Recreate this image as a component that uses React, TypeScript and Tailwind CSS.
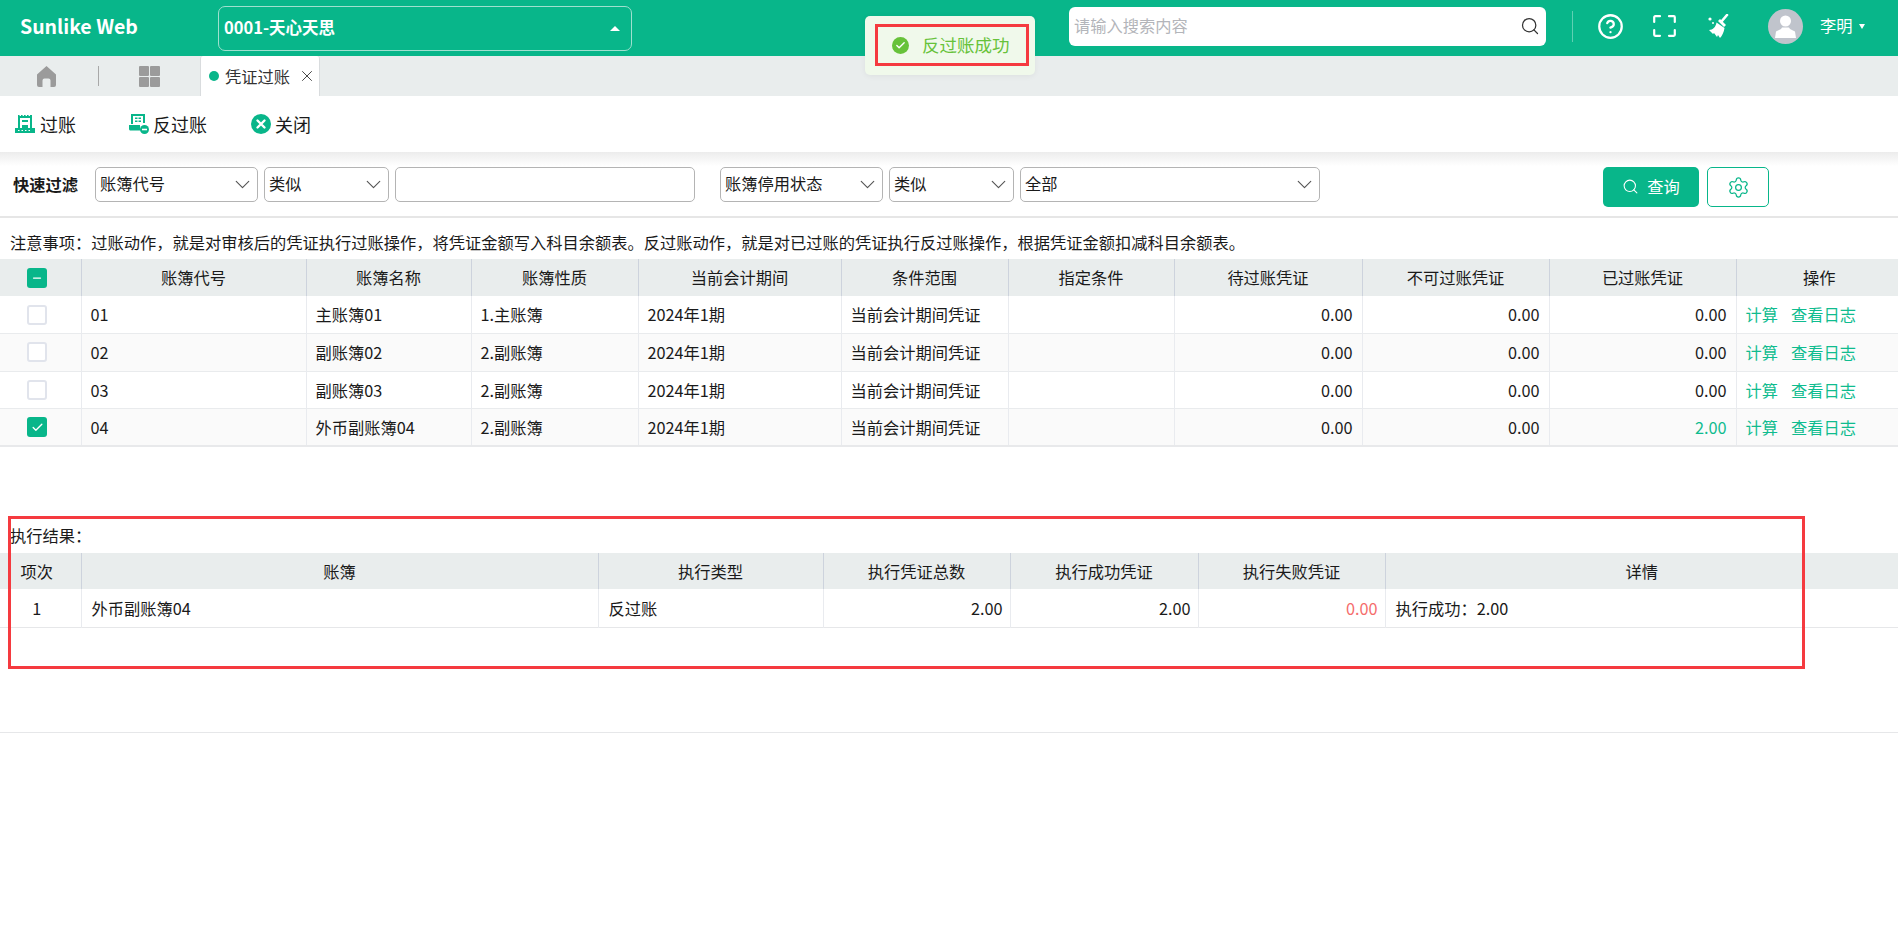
import React from "react";
import { ChevronDown, CircleHelp, Search, Settings, X, Check, Minus } from "lucide-react";

const ledgerRows = [
  { code: "01", name: "主账簿01", type: "1.主账簿", posted: "0.00" },
  { code: "02", name: "副账簿02", type: "2.副账簿", posted: "0.00" },
  { code: "03", name: "副账簿03", type: "2.副账簿", posted: "0.00" },
  { code: "04", name: "外币副账簿04", type: "2.副账簿", posted: "2.00", checked: true },
];

const headCell = "h-[37px] border-l border-[#cdd3dd] font-normal text-center first:border-l-0 first:pr-[7px] last:pl-1";
const bodyCell = "border-l border-[#e9ebef] px-[9px] first:border-l-0";
const resultHead = "h-9 border-l border-[#cdd3dd] font-normal text-center first:border-l-0 first:pr-[7px]";
const resultCell = "border-l border-[#e9ebef] pl-[10px] pr-[7px] first:border-l-0";

const PostIcon = () => (
  <svg width="20" height="18" viewBox="0 0 20 18" className="shrink-0">
    <path fill="#08b68a" d="M3 0h1.6v1H6V0h1.6v1H9V0h1.6v1H12V0h1.6v1H15V0h2v13h-2V3H5v10H3zM7 5h6v2H7zM7 10h6v3H7zM0 13h20v5H0z" />
    <path fill="#fff" d="M3 15h1.5v1H3zM6.5 15H8v1H6.5zM10 15h1.5v1H10zM13.5 15H15v1h-1.5z" />
  </svg>
);

const UnpostIcon = () => (
  <svg width="20" height="20" viewBox="0 0 20 20" className="shrink-0">
    <path fill="#08b68a" d="M2 0h14v9H14V2H4v8H2zM6 3.5h2.5V5H6zM9.5 3.5H12V5H9.5zM6 6.5h2.5V8H6zM9.5 6.5H12V8H9.5zM0 11h11v2.5c0 1 .3 2 .8 3H1.5C.7 16.5 0 15.8 0 15z" />
    <circle cx="15.5" cy="15.5" r="4.5" fill="#08b68a" />
    <path fill="#fff" d="M13 14.7h5v1.6h-5z" />
  </svg>
);

const CloseIcon = () => (
  <svg width="20" height="20" viewBox="0 0 20 20" className="shrink-0">
    <circle cx="10" cy="10" r="10" fill="#08b68a" />
    <path d="M6.5 6.5l7 7M13.5 6.5l-7 7" stroke="#fff" strokeWidth="2.4" strokeLinecap="round" />
  </svg>
);

const HomeIcon = () => (
  <svg width="19" height="21" viewBox="0 0 19 21">
    <path fill="#9b9b9b" d="M9.5 0L19 8.5V19a2 2 0 0 1-2 2h-3.5v-6.5a2 2 0 0 0-2-2h-4a2 2 0 0 0-2 2V21H2a2 2 0 0 1-2-2V8.5z" />
  </svg>
);

const GridIcon = () => (
  <svg width="21" height="21" viewBox="0 0 21 21">
    <path fill="#9b9b9b" d="M1 0h8a1 1 0 0 1 1 1v8a1 1 0 0 1-1 1H1a1 1 0 0 1-1-1V1a1 1 0 0 1 1-1zM12 0h8a1 1 0 0 1 1 1v8a1 1 0 0 1-1 1h-8a1 1 0 0 1-1-1V1a1 1 0 0 1 1-1zM1 11h8a1 1 0 0 1 1 1v8a1 1 0 0 1-1 1H1a1 1 0 0 1-1-1v-8a1 1 0 0 1 1-1zM12 11h8a1 1 0 0 1 1 1v8a1 1 0 0 1-1 1h-8a1 1 0 0 1-1-1v-8a1 1 0 0 1 1-1z" />
  </svg>
);

const FullscreenIcon = () => (
  <svg width="23" height="22" viewBox="0 0 23 22" fill="none" stroke="#fff" strokeWidth="2.2" strokeLinecap="round">
    <path d="M1.2 7V2.2a1 1 0 0 1 1-1H7M16 1.2h4.8a1 1 0 0 1 1 1V7M21.8 15v4.8a1 1 0 0 1-1 1H16M7 20.8H2.2a1 1 0 0 1-1-1V15" />
  </svg>
);

const BroomIcon = () => (
  <svg width="24" height="24" viewBox="0 0 24 24" fill="#fff">
    <path d="M20 1l-5.5 6.5" stroke="#fff" strokeWidth="2.6" strokeLinecap="round" />
    <path d="M11 7l2-2 6 6-2 2z" />
    <path d="M9.5 8.5l8 5.5c-.5 4-2.500 8-4.500 10l-2-3-1 2-3-4-1 1-4-4c4 0 7-3.500 7.500-7.500z" />
    <circle cx="3" cy="5" r="1.6" />
    <circle cx="6" cy="9" r="1" />
  </svg>
);

const UserAvatar = () => (
  <div className="flex h-[35px] w-[35px] items-center justify-center overflow-hidden rounded-full bg-[#c0c4cc]">
    <svg width="21" height="23" viewBox="0 0 21 23">
      <circle cx="10.5" cy="6" r="5.5" fill="#fff" />
      <path fill="#fff" d="M7 12.5h7l1 1.5 5 2.5 1 6.5H0l1-6.5L6 14z" />
    </svg>
  </div>
);

const SelectBox = ({ value, className }: { value: string; className: string }) => (
  <div className={`flex h-[35px] items-center justify-between rounded-[5px] border border-[#b4b4b4] pl-1 pr-[2px] ${className}`}>
    <span className="pb-[2px]">{value}</span>
    <ChevronDown size={25} strokeWidth={1.1} color="#555" />
  </div>
);

const RowCheckbox = ({ checked }: { checked?: boolean }) =>
  checked ? (
    <div className="ml-[18px] flex h-5 w-5 items-center justify-center rounded-[3px] bg-[#08b68a]">
      <Check size={13} strokeWidth={2.5} color="#fff" />
    </div>
  ) : (
    <div className="ml-[18px] h-5 w-5 rounded-[3px] border-2 border-[#e1e4ec] bg-white" />
  );

const ToolButton = ({ icon, label, className }: { icon: React.ReactNode; label: string; className: string }) => (
  <div className={`flex items-center text-[18px] ${className}`}>
    {icon}
    <span>{label}</span>
  </div>
);

export default function App() {
  return (
    <div
      className="relative min-h-[925px] overflow-hidden bg-white text-[16.25px] text-[#1a1a1a]"
      style={{ fontFamily: '"Noto Sans CJK SC", "Noto Sans", sans-serif' }}
    >
      {/* top bar */}
      <header className="flex h-14 items-center bg-[#08b68a] text-white">
        <div className="mb-1 w-[218px] pl-5 text-[19.5px] font-bold">Sunlike Web</div>
        <div className="flex h-[45px] w-[414px] items-center justify-between rounded-[7px] border border-[#9fe0cf] pl-[5px] pr-[11px] text-[16.5px] font-bold">
          <span className="pb-[2px]">0001-天心天思</span>
          <span className="h-0 w-0 border-x-[5px] border-b-[5px] border-x-transparent border-b-white" />
        </div>
        <div className="flex h-[52px] items-center self-start">
          <div className="ml-[437px] flex h-[39px] w-[477px] items-center justify-between rounded-[6px] bg-white pl-[5px] pr-[6px] text-[#b3b5ba]">
            <span className="pb-[2px]">请输入搜索内容</span>
            <Search size={20} strokeWidth={1.5} color="#333" />
          </div>
          <div className="ml-[26px] h-[31px] w-px bg-[#5fd0b3]" />
          <CircleHelp size={27} strokeWidth={2} className="ml-[24px]" />
          <div className="ml-[29px]">
            <FullscreenIcon />
          </div>
          <div className="ml-[31px]">
            <BroomIcon />
          </div>
          <div className="ml-[37px]">
            <UserAvatar />
          </div>
          <span className="ml-[17px] pb-[2px]">李明</span>
          <span className="ml-[6px] h-0 w-0 border-x-[3.5px] border-t-[5px] border-x-transparent border-t-white" />
        </div>
      </header>

      {/* tab strip */}
      <div className="flex h-10 items-center bg-[#e9eded]">
        <div className="ml-[37px]">
          <HomeIcon />
        </div>
        <div className="ml-[42px] h-5 w-px bg-[#a8a8a8]" />
        <div className="ml-[40px]">
          <GridIcon />
        </div>
        <div className="ml-10 flex h-10 w-[120px] items-center rounded-t-[3px] border-x border-[#d9dcde] bg-white pl-2 text-[#333]">
          <span className="h-[10px] w-[10px] rounded-full bg-[#08b68a]" />
          <span className="ml-[6px]">凭证过账</span>
          <X size={18} strokeWidth={1.2} className="ml-2" />
        </div>
      </div>

      {/* toolbar */}
      <div className="flex h-14 items-center">
        <ToolButton icon={<PostIcon />} label="过账" className="ml-[15px] w-[114px] gap-[5px]" />
        <ToolButton icon={<UnpostIcon />} label="反过账" className="w-[122px] gap-1" />
        <ToolButton icon={<CloseIcon />} label="关闭" className="gap-1" />
      </div>

      {/* quick filter */}
      <div className="flex h-[66px] items-start border-b-2 border-[#e6e6e6] bg-gradient-to-b from-[#ececec] to-white to-[14px] pt-[15px]">
        <span className="ml-[13px] mt-[5px] w-[82px] font-bold">快速过滤</span>
        <SelectBox value="账簿代号" className="w-[163px]" />
        <SelectBox value="类似" className="ml-[6px] w-[125px]" />
        <div className="ml-[6px] h-[35px] w-[300px] rounded-[5px] border border-[#b4b4b4]" />
        <SelectBox value="账簿停用状态" className="ml-[25px] w-[163px]" />
        <SelectBox value="类似" className="ml-[6px] w-[125px]" />
        <SelectBox value="全部" className="ml-[6px] w-[300px]" />
        <button className="ml-[283px] flex h-10 w-24 items-center justify-center gap-2 rounded-[5px] bg-[#08b68a] pb-[2px] text-white">
          <Search size={17} strokeWidth={1.5} />
          查询
        </button>
        <button className="ml-2 flex h-10 w-[62px] items-center justify-center rounded-[5px] border border-[#08b68a] text-[#08b68a]">
          <Settings size={23} strokeWidth={1.3} />
        </button>
      </div>

      <div className="flex h-[41px] items-center pl-[10px] pt-2">
        注意事项：过账动作，就是对审核后的凭证执行过账操作，将凭证金额写入科目余额表。反过账动作，就是对已过账的凭证执行反过账操作，根据凭证金额扣减科目余额表。
      </div>

      {/* ledger table */}
      <table className="w-full table-fixed border-collapse border-b-2 border-[#e8e9eb]">
        <colgroup>
          <col className="w-[81px]" />
          <col className="w-[225px]" />
          <col className="w-[165px]" />
          <col className="w-[167px]" />
          <col className="w-[203px]" />
          <col className="w-[167px]" />
          <col className="w-[166px]" />
          <col className="w-[188px]" />
          <col className="w-[187px]" />
          <col className="w-[187px]" />
          <col className="w-[162px]" />
        </colgroup>
        <thead>
          <tr className="bg-[#e9eded]">
            <th className={headCell}>
              <div className="ml-[27px] flex h-5 w-5 items-center justify-center rounded-[3px] bg-[#08b68a]">
                <Minus size={12} strokeWidth={2.5} color="#fff" />
              </div>
            </th>
            <th className={headCell}>账簿代号</th>
            <th className={headCell}>账簿名称</th>
            <th className={headCell}>账簿性质</th>
            <th className={headCell}>当前会计期间</th>
            <th className={headCell}>条件范围</th>
            <th className={headCell}>指定条件</th>
            <th className={headCell}>待过账凭证</th>
            <th className={headCell}>不可过账凭证</th>
            <th className={headCell}>已过账凭证</th>
            <th className={headCell}>操作</th>
          </tr>
        </thead>
        <tbody>
          {ledgerRows.map((row, index) => (
            <tr key={row.code} className={`h-[37.5px] border-b border-[#e9ebed] ${index % 2 ? "bg-[#fafafa]" : "bg-white"}`}>
              <td className={bodyCell}>
                <RowCheckbox checked={row.checked} />
              </td>
              <td className={bodyCell}>{row.code}</td>
              <td className={bodyCell}>{row.name}</td>
              <td className={bodyCell}>{row.type}</td>
              <td className={bodyCell}>2024年1期</td>
              <td className={bodyCell}>当前会计期间凭证</td>
              <td className={bodyCell} />
              <td className={`${bodyCell} text-right`}>0.00</td>
              <td className={`${bodyCell} text-right`}>0.00</td>
              <td className={`${bodyCell} text-right ${row.posted === "2.00" ? "text-[#0fbc8f]" : ""}`}>{row.posted}</td>
              <td className={`${bodyCell} text-[#0fbc8f]`}>
                计算<span className="ml-[13px]">查看日志</span>
              </td>
            </tr>
          ))}
        </tbody>
      </table>

      <div className="flex h-[106px] items-end pb-[6px] pl-[10px]">执行结果：</div>

      {/* result table */}
      <table className="w-full table-fixed border-collapse border-b border-[#e6e7e9]">
        <colgroup>
          <col className="w-[81px]" />
          <col className="w-[517px]" />
          <col className="w-[225px]" />
          <col className="w-[187px]" />
          <col className="w-[188px]" />
          <col className="w-[187px]" />
          <col className="w-[513px]" />
        </colgroup>
        <thead>
          <tr className="bg-[#e9eded]">
            <th className={resultHead}>项次</th>
            <th className={resultHead}>账簿</th>
            <th className={resultHead}>执行类型</th>
            <th className={resultHead}>执行凭证总数</th>
            <th className={resultHead}>执行成功凭证</th>
            <th className={resultHead}>执行失败凭证</th>
            <th className={resultHead}>详情</th>
          </tr>
        </thead>
        <tbody>
          <tr className="h-[38px]">
            <td className={`${resultCell} !pl-0 !pr-[7px] text-center`}>1</td>
            <td className={resultCell}>外币副账簿04</td>
            <td className={resultCell}>反过账</td>
            <td className={`${resultCell} text-right`}>2.00</td>
            <td className={`${resultCell} text-right`}>2.00</td>
            <td className={`${resultCell} text-right text-[#f56c6c]`}>0.00</td>
            <td className={resultCell}>执行成功：2.00</td>
          </tr>
        </tbody>
      </table>
      <div className="h-[105px] border-b border-[#e6e7e9]" />

      {/* success toast */}
      <div className="absolute left-[865px] top-4 flex h-[59px] w-[170px] items-center gap-[13px] rounded-[5px] bg-[#f0f9eb] pl-[27px] text-[17.5px] text-[#67c23a] shadow-[0_1px_6px_rgba(0,0,0,0.06)]">
        <span className="flex h-[17px] w-[17px] shrink-0 items-center justify-center rounded-full bg-[#67c23a]">
          <Check size={11} strokeWidth={3} color="#fff" />
        </span>
        <span>反过账成功</span>
        <div className="absolute left-[10px] top-2 h-[42px] w-[154px] border-[3px] border-[#f53a3f]" />
      </div>

      {/* annotation around the result block */}
      <div className="absolute left-2 top-[516px] h-[153px] w-[1797px] border-[3px] border-[#f53a3f]" />
    </div>
  );
}
